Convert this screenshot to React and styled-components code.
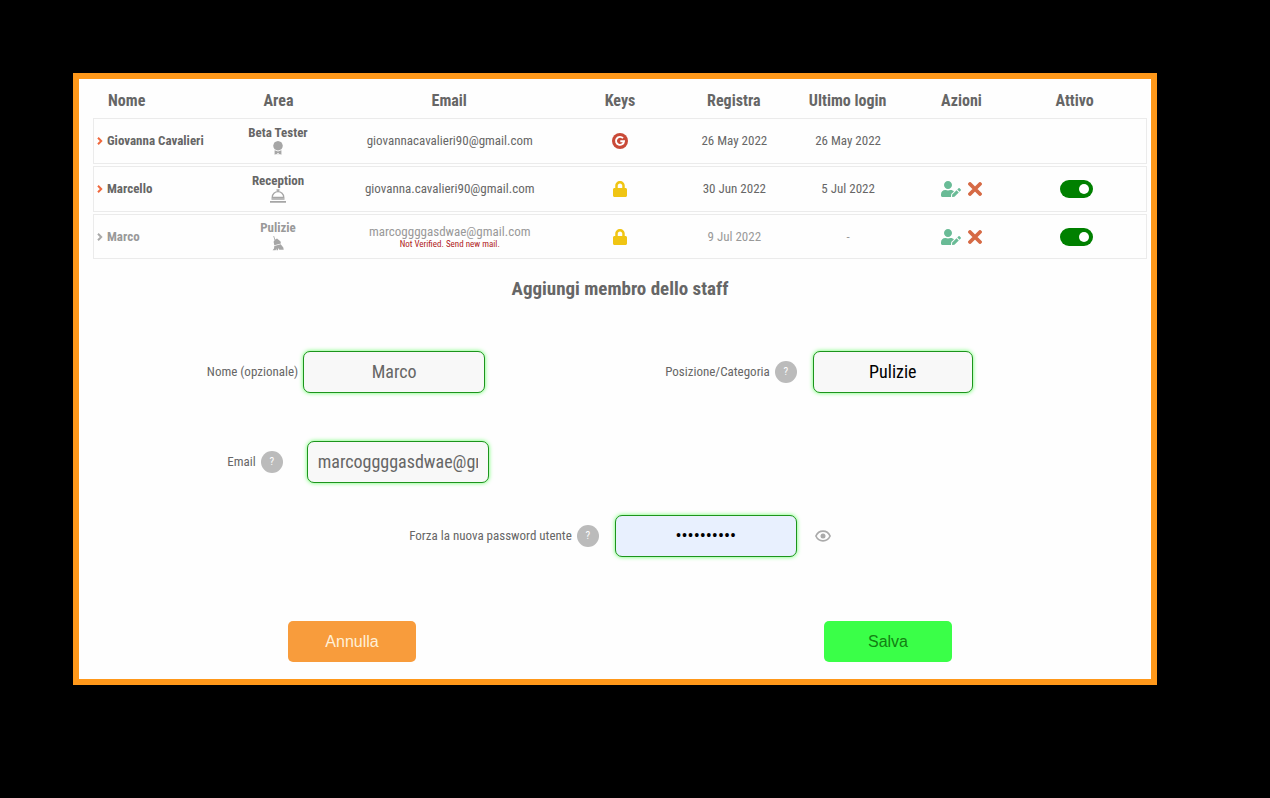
import React, { useState } from "react";
import styled, { createGlobalStyle } from "styled-components";
import { FaLock, FaUserEdit } from "react-icons/fa";

const GlobalStyle = createGlobalStyle`
  * { box-sizing: border-box; }
  body {
    margin: 0;
    background: #000;
    color: #666;
    font-family: "Roboto Condensed", "Liberation Sans Narrow", Roboto, sans-serif;
    font-size: 13px;
    line-height: 16px;
  }
  button, input, select { font-family: inherit; }
`;

const Page = styled.main`
  padding: 73px 113px 113px 73px;
`;

const Panel = styled.section`
  border: 6px solid #ff981a;
  background: #fefefe;
  padding: 5px 4px 17px 14px;
`;

const StaffTable = styled.table`
  width: 100%;
  table-layout: fixed;
  border-collapse: separate;
  border-spacing: 0 2px;
`;

const Col = styled.col`
  width: ${(p) => p.$width};
`;

const HeadCell = styled.th`
  height: 30px;
  padding: 0 ${(p) => (p.$last ? 16 : 0)}px 0 ${(p) => (p.$first ? 15 : 0)}px;
  font-size: 16px;
  font-weight: 700;
  line-height: 20px;
  text-align: ${(p) => (p.$first ? "left" : "center")};
`;

const Cell = styled.td`
  height: 46px;
  padding: 0 0 0 1px;
  border: solid #ebebeb;
  border-width: 1px 0;
  text-align: center;
  vertical-align: middle;
  &:first-child { border-left-width: 1px; }
  &:last-child { border-right-width: 1px; padding-right: 12px; }
`;

const Row = styled.tr`
  color: ${(p) => (p.$muted ? "#999" : "#666")};
  &:last-child ${Cell} { height: 45px; }
`;

const NameBox = styled.div`
  display: flex;
  align-items: center;
  gap: 4px;
  padding-left: 1px;
  font-weight: 700;
  svg { color: ${(p) => (p.$muted ? "#aaa" : "#f0693e")}; }
`;

const AreaBox = styled.div`
  display: flex;
  flex-direction: column;
  align-items: center;
  padding: 0 2px 2px 0;
  font-weight: 700;
  svg { color: #a6a6a6; }
`;

const MailBox = styled.div`
  display: flex;
  flex-direction: column;
  align-items: center;
`;

const ResendLink = styled.a`
  color: #b01c1c;
  font-size: 9px;
  line-height: 9px;
  text-decoration: none;
`;

const Glyph = styled.span`
  display: flex;
  justify-content: center;
  color: ${(p) => p.$color};
`;

const Actions = styled.div`
  display: flex;
  align-items: center;
  justify-content: center;
  gap: 7px;
`;

const IconButton = styled.button`
  display: flex;
  padding: 0;
  border: 0;
  background: none;
  color: ${(p) => p.$color};
  cursor: pointer;
`;

const Toggle = styled.input`
  display: inline-flex;
  align-items: center;
  justify-content: flex-start;
  appearance: none;
  width: 33px;
  height: 18px;
  margin: 0;
  padding: 0 4px;
  border-radius: 9px;
  background: #aaa;
  vertical-align: top;
  cursor: pointer;
  &::before {
    content: "";
    width: 10px;
    height: 10px;
    border-radius: 50%;
    background: #fff;
  }
  &:checked { background: #008000; justify-content: flex-end; }
`;

const Title = styled.h2`
  margin: 17px 0 51px;
  font-size: 19px;
  font-weight: 700;
  line-height: 22px;
  text-align: center;
`;

const Fields = styled.div`
  display: grid;
  grid-template-columns: 1fr 1fr;
  gap: 48px 18px;
`;

const Field = styled.div`
  display: flex;
  align-items: center;
  justify-content: center;
  padding: 0 ${(p) => p.$after || 0}px 0 ${(p) => p.$before || 0}px;
`;

const PasswordField = styled(Field)`
  margin-top: 32px;
`;

const Help = styled.button`
  width: 22px;
  height: 22px;
  margin: 0 ${(p) => p.$gap}px 0 5px;
  padding: 0;
  border: 0;
  border-radius: 50%;
  background: #bbb;
  color: #fff;
  font-size: 11px;
  line-height: 22px;
`;

const Input = styled.input`
  width: 182px;
  height: 42px;
  margin: 0;
  padding: 0 10px 2px;
  border: 1px solid #1c941c;
  border-radius: 7px;
  background: ${(p) => (p.$filled ? "#e8f0fe" : "#f8f8f8")};
  box-shadow: 0 0 4px #6f6;
  color: ${(p) => (p.$filled ? "#000" : "#666")};
  font-size: 18px;
  text-align: center;
  outline: none;
`;

const NameInput = styled(Input)`
  margin-left: 5px;
`;

const Select = styled(Input)`
  appearance: none;
  width: 160px;
  color: #000;
  text-align-last: center;
`;

const RevealButton = styled(IconButton)`
  margin-left: 18px;
`;

const Buttons = styled.div`
  display: grid;
  grid-template-columns: 1fr 1fr;
  column-gap: 18px;
  justify-items: center;
  margin-top: 64px;
`;

const FormButton = styled.button`
  width: 128px;
  height: 41px;
  padding: 0;
  border: 0;
  border-radius: 5px;
  background: ${(p) => p.$bg};
  color: ${(p) => p.$color};
  font-family: "Liberation Sans", Arial, sans-serif;
  font-size: 16px;
  cursor: pointer;
`;

const ChevronIcon = () => (
  <svg width="7" height="8" viewBox="0 0 7 8" fill="none" stroke="currentColor" strokeWidth="2" aria-hidden="true">
    <path d="M2 .8L5.200 4 2 7.200" />
  </svg>
);

const AwardIcon = () => (
  <svg width="12" height="14" viewBox="0 0 12 14" fill="currentColor" aria-hidden="true">
    <path d="M6 0l1.700.5 1.700.8.9 1.600.5 1.900-.5 1.900-.9 1.500-1.700.9L6 9.600l-1.700-.5-1.700-.9-.9-1.500-.5-1.900.5-1.900.9-1.600 1.700-.8z" />
    <path d="M2.600 9.200L6 10.500l3.400-1.300v4.500l-1.700-.6-1 .6V12H5.300v1.700l-1-.6-1.700.6z" />
  </svg>
);

const BellIcon = () => (
  <svg width="16" height="14" viewBox="0 0 16 14" fill="none" stroke="currentColor" aria-hidden="true">
    <path d="M2.200 8.500C2.200 5 5 2.700 8 2.700s5.800 2.300 5.800 5.800z" strokeWidth="1.300" />
    <path d="M6.500 1h3M8 1v1.500" strokeWidth="1.300" />
    <path d="M1.500 10h13M0 12.800h16" strokeWidth="1.700" />
  </svg>
);

const CleaningIcon = () => (
  <svg width="12" height="15" viewBox="0 0 12 15" fill="currentColor" aria-hidden="true">
    <path d="M1.300 0L2.100 0l1.100 3.600L5 2.600l3.600 2.800.3 2.200L2.300 9.200 1.600 5.800l.9-1.600z" />
    <path d="M2.300 10l6.400-1.700 2.600 3.200.4 2.300H7.300L6.500 12l-.6 2.200H4.500L4.400 12.600l-.8 1.600H.6L2 12.500z" />
  </svg>
);

const GoogleIcon = () => (
  <svg width="16" height="16" viewBox="0 0 16 16" aria-hidden="true">
    <circle cx="8" cy="8" r="8" fill="currentColor" />
    <path d="M11 5.200A4 4 0 1 0 12 8.300H8.300" fill="none" stroke="#fff" strokeWidth="1.900" />
  </svg>
);

const CrossIcon = () => (
  <svg width="14" height="14" viewBox="0 0 14 14" fill="none" stroke="currentColor" strokeWidth="3.800" strokeLinecap="round" aria-hidden="true">
    <path d="M2 2l10 10M12 2L2 12" />
  </svg>
);

const EyeIcon = () => (
  <svg width="16" height="12" viewBox="0 0 16 12" aria-hidden="true">
    <path d="M.9 6C2.300 3 4.900 1.200 8 1.200S13.700 3 15.100 6C13.700 9 11.100 10.800 8 10.800S2.300 9 .9 6z" fill="none" stroke="currentColor" strokeWidth="1.700" />
    <circle cx="8" cy="6" r="2.500" fill="currentColor" />
  </svg>
);

const columns = [
  ["Nome", "12.2%"],
  ["Area", "10.8%"],
  ["Email", "21.6%"],
  ["Keys", "10.8%"],
  ["Registra", "10.8%"],
  ["Ultimo login", "10.8%"],
  ["Azioni", "10.8%"],
  ["Attivo", "12.2%"],
];

const staff = [
  { name: "Giovanna Cavalieri", area: "Beta Tester", icon: <AwardIcon />, email: "giovannacavalieri90@gmail.com", google: true, registered: "26 May 2022", login: "26 May 2022" },
  { name: "Marcello", area: "Reception", icon: <BellIcon />, email: "giovanna.cavalieri90@gmail.com", registered: "30 Jun 2022", login: "5 Jul 2022", editable: true },
  { name: "Marco", area: "Pulizie", icon: <CleaningIcon />, email: "marcoggggasdwae@gmail.com", registered: "9 Jul 2022", login: "-", editable: true, muted: true, unverified: true },
];

function StaffRow({ person }) {
  const { muted } = person;
  return (
    <Row $muted={muted}>
      <Cell>
        <NameBox $muted={muted}>
          <ChevronIcon />
          {person.name}
        </NameBox>
      </Cell>
      <Cell><AreaBox>{person.area}{person.icon}</AreaBox></Cell>
      <Cell>
        <MailBox>
          {person.email}
          {person.unverified && <ResendLink href="#resend">Not Verified. Send new mail.</ResendLink>}
        </MailBox>
      </Cell>
      <Cell>
        {person.google
          ? <Glyph $color="#c94a38"><GoogleIcon /></Glyph>
          : <Glyph $color="#f0c514"><FaLock size={16} /></Glyph>}
      </Cell>
      <Cell>{person.registered}</Cell>
      <Cell>{person.login}</Cell>
      <Cell>
        {person.editable && (
          <Actions>
            <IconButton type="button" $color="#69bb96" aria-label={`Modifica ${person.name}`}>
              <FaUserEdit size={20} />
            </IconButton>
            <IconButton type="button" $color="#d66a45" aria-label={`Elimina ${person.name}`}>
              <CrossIcon />
            </IconButton>
          </Actions>
        )}
      </Cell>
      <Cell>
        {person.editable && <Toggle type="checkbox" defaultChecked aria-label={`${person.name} attivo`} />}
      </Cell>
    </Row>
  );
}

export default function App() {
  const [visible, setVisible] = useState(false);
  return (
    <Page>
      <GlobalStyle />
      <Panel>
        <StaffTable>
          <colgroup>{columns.map(([label, width]) => <Col key={label} $width={width} />)}</colgroup>
          <thead>
            <tr>
              {columns.map(([label], i) => (
                <HeadCell key={label} scope="col" $first={i === 0} $last={i === columns.length - 1}>{label}</HeadCell>
              ))}
            </tr>
          </thead>
          <tbody>{staff.map((person) => <StaffRow key={person.name} person={person} />)}</tbody>
        </StaffTable>
        <form onSubmit={(e) => e.preventDefault()}>
          <Title>Aggiungi membro dello staff</Title>
          <Fields>
            <Field $after={12}>
              <label htmlFor="name">Nome (opzionale)</label>
              <NameInput id="name" defaultValue="Marco" />
            </Field>
            <Field $after={138}>
              <label htmlFor="role">Posizione/Categoria</label>
              <Help type="button" $gap={16}>?</Help>
              <Select as="select" id="role" defaultValue="Pulizie">
                <option>Pulizie</option>
                <option>Reception</option>
              </Select>
            </Field>
            <Field $before={12}>
              <label htmlFor="email">Email</label>
              <Help type="button" $gap={24}>?</Help>
              <Input id="email" defaultValue="marcoggggasdwae@gmail.com" />
            </Field>
          </Fields>
          <PasswordField>
            <label htmlFor="password">Forza la nuova password utente</label>
            <Help type="button" $gap={16}>?</Help>
            <Input id="password" $filled type={visible ? "text" : "password"} defaultValue="password12" />
            <RevealButton type="button" $color="#aaa" aria-label="Mostra password" onClick={() => setVisible(!visible)}>
              <EyeIcon />
            </RevealButton>
          </PasswordField>
          <Buttons>
            <FormButton type="button" $bg="#f89c3c" $color="#fff0d8">Annulla</FormButton>
            <FormButton type="submit" $bg="#3aff48" $color="#128012">Salva</FormButton>
          </Buttons>
        </form>
      </Panel>
    </Page>
  );
}
